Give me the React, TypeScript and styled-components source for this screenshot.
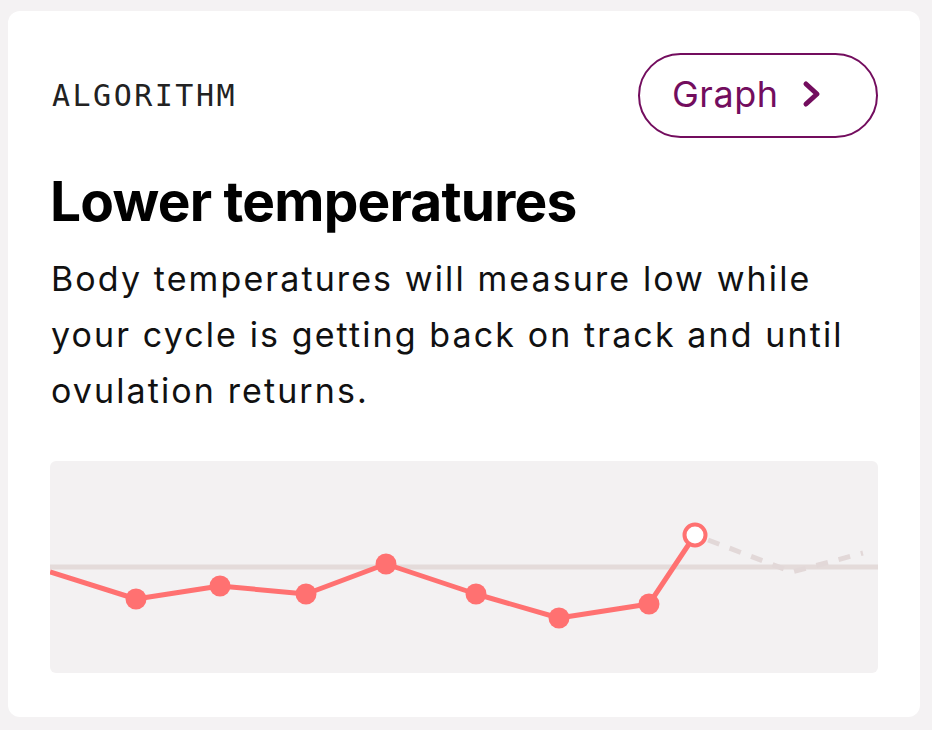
import React from "react";
import styled, { createGlobalStyle } from "styled-components";

const GlobalStyle = createGlobalStyle`
  html, body { margin: 0; padding: 0; background: #f4f2f3; }
  body { font-family: "Inter", "Liberation Sans", sans-serif; }
`;

const Card = styled.section`
  margin: 11px 12px 13px 8px;
  background: #ffffff;
  border-radius: 12px;
  padding: 42px 42px 44px 42px;
  display: flex;
  flex-direction: column;
`;

const Header = styled.div`
  display: flex;
  align-items: center;
  justify-content: space-between;
`;

const Eyebrow = styled.span`
  font-family: "DejaVu Sans Mono", "Liberation Mono", monospace;
  font-size: 30px;
  letter-spacing: 2.5px;
  color: #222;
  padding-left: 2px;
`;

const PillButton = styled.button`
  box-sizing: border-box;
  width: 240px;
  height: 85px;
  border: 2.5px solid #730d5e;
  border-radius: 43px;
  background: #fff;
  color: #730d5e;
  font-family: "Inter", "Liberation Sans", sans-serif;
  font-size: 36px;
  letter-spacing: 0.5px;
  display: flex;
  align-items: center;
  justify-content: flex-start;
  gap: 24px;
  padding: 0 0 4px 32px;
  cursor: pointer;
`;

const Title = styled.h1`
  margin: 30px 0 0 0;
  font-family: "Inter", "Liberation Sans", sans-serif;
  font-weight: 700;
  font-size: 55px;
  line-height: 66px;
  letter-spacing: -0.8px;
  color: #000;
`;

const Body = styled.p`
  margin: 17px 0 0 0;
  font-family: "Inter", "Liberation Sans", sans-serif;
  font-size: 34px;
  line-height: 56px;
  letter-spacing: 2.1px;
  color: #111;
  padding-left: 1px;
`;

const ChartBox = styled.div`
  margin-top: 42px;
  height: 212px;
  background: #f3f1f2;
  border-radius: 6px;
  overflow: hidden;
`;

const ChartSvg = styled.svg`
  display: block;
  width: 100%;
  height: 100%;
`;

const pts: [number, number][] = [
  [0, 111],
  [86, 138],
  [170, 125],
  [256, 133],
  [336, 103],
  [426, 133],
  [509, 157],
  [599, 143],
  [645, 74],
];

const Chevron = () => (
  <svg width="20" height="30" viewBox="0 0 20 30" fill="none">
    <path d="M4 5 L15 15 L4 25" stroke="#730d5e" strokeWidth="5" strokeLinecap="round" strokeLinejoin="round" />
  </svg>
);

export default function App() {
  const line = pts.map((p) => p.join(",")).join(" ");
  return (
    <>
      <GlobalStyle />
      <Card>
        <Header>
          <Eyebrow>ALGORITHM</Eyebrow>
          <PillButton>
            <span>Graph</span>
            <Chevron />
          </PillButton>
        </Header>
        <Title>Lower temperatures</Title>
        <Body>
          Body temperatures will measure low while your cycle is getting back on track and until
          ovulation returns.
        </Body>
        <ChartBox>
          <ChartSvg viewBox="0 0 828 212" preserveAspectRatio="none">
            <line x1="0" y1="106" x2="828" y2="106" stroke="#e4dbda" strokeWidth="5" />
            <polyline
              points="645,74 742,111 813,92"
              fill="none"
              stroke="#e2d8d8"
              strokeWidth="5"
              strokeDasharray="12 11"
              strokeDashoffset="-14"
            />
            <polyline points={line} fill="none" stroke="#ff7171" strokeWidth="5" strokeLinejoin="round" />
            {pts.slice(1, 8).map(([x, y]) => (
              <circle key={x} cx={x} cy={y} r="10.5" fill="#ff7171" />
            ))}
            <circle cx="645" cy="74" r="10.5" fill="#fff" stroke="#ff7171" strokeWidth="4" />
          </ChartSvg>
        </ChartBox>
      </Card>
    </>
  );
}
